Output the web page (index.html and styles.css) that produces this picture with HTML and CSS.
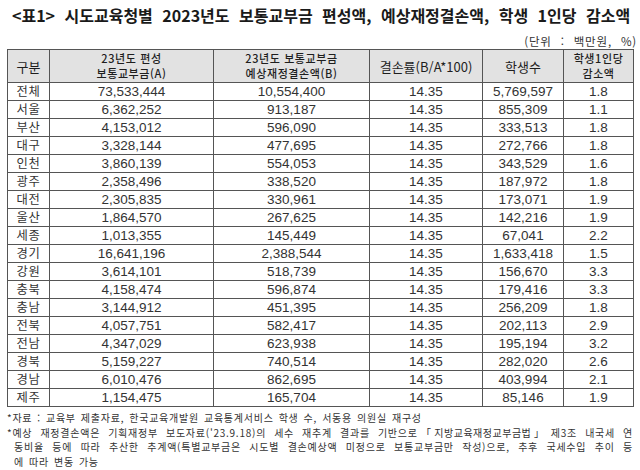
FILE: index.html
```html
<!DOCTYPE html>
<html lang="ko">
<head>
<meta charset="utf-8">
<title>표1</title>
<link rel="stylesheet" href="styles.css">
</head>
<body>
<div class="page">
  <h1 class="title">&lt;표1&gt; 시도교육청별 2023년도 보통교부금 편성액, 예상재정결손액, 학생 1인당 감소액</h1>
  <div class="unit">(단위 : 백만원, %)</div>
  <table class="grid">
    <colgroup>
      <col class="c1"><col class="c2"><col class="c3"><col class="c4"><col class="c5"><col class="c6">
    </colgroup>
    <thead>
      <tr>
        <th class="one">구분</th>
        <th>23년도 편성<br>보통교부금(A)</th>
        <th>23년도 보통교부금<br>예상재정결손액(B)</th>
        <th class="one">결손률(B/A*100)</th>
        <th class="one">학생수</th>
        <th>학생1인당<br>감소액</th>
      </tr>
    </thead>
    <tbody>
      <tr><td class="name">전체</td><td>73,533,444</td><td>10,554,400</td><td>14.35</td><td>5,769,597</td><td>1.8</td></tr>
      <tr><td class="name">서울</td><td>6,362,252</td><td>913,187</td><td>14.35</td><td>855,309</td><td>1.1</td></tr>
      <tr><td class="name">부산</td><td>4,153,012</td><td>596,090</td><td>14.35</td><td>333,513</td><td>1.8</td></tr>
      <tr><td class="name">대구</td><td>3,328,144</td><td>477,695</td><td>14.35</td><td>272,766</td><td>1.8</td></tr>
      <tr><td class="name">인천</td><td>3,860,139</td><td>554,053</td><td>14.35</td><td>343,529</td><td>1.6</td></tr>
      <tr><td class="name">광주</td><td>2,358,496</td><td>338,520</td><td>14.35</td><td>187,972</td><td>1.8</td></tr>
      <tr><td class="name">대전</td><td>2,305,835</td><td>330,961</td><td>14.35</td><td>173,071</td><td>1.9</td></tr>
      <tr><td class="name">울산</td><td>1,864,570</td><td>267,625</td><td>14.35</td><td>142,216</td><td>1.9</td></tr>
      <tr><td class="name">세종</td><td>1,013,355</td><td>145,449</td><td>14.35</td><td>67,041</td><td>2.2</td></tr>
      <tr><td class="name">경기</td><td>16,641,196</td><td>2,388,544</td><td>14.35</td><td>1,633,418</td><td>1.5</td></tr>
      <tr><td class="name">강원</td><td>3,614,101</td><td>518,739</td><td>14.35</td><td>156,670</td><td>3.3</td></tr>
      <tr><td class="name">충북</td><td>4,158,474</td><td>596,874</td><td>14.35</td><td>179,416</td><td>3.3</td></tr>
      <tr><td class="name">충남</td><td>3,144,912</td><td>451,395</td><td>14.35</td><td>256,209</td><td>1.8</td></tr>
      <tr><td class="name">전북</td><td>4,057,751</td><td>582,417</td><td>14.35</td><td>202,113</td><td>2.9</td></tr>
      <tr><td class="name">전남</td><td>4,347,029</td><td>623,938</td><td>14.35</td><td>195,194</td><td>3.2</td></tr>
      <tr><td class="name">경북</td><td>5,159,227</td><td>740,514</td><td>14.35</td><td>282,020</td><td>2.6</td></tr>
      <tr><td class="name">경남</td><td>6,010,476</td><td>862,695</td><td>14.35</td><td>403,994</td><td>2.1</td></tr>
      <tr><td class="name">제주</td><td>1,154,475</td><td>165,704</td><td>14.35</td><td>85,146</td><td>1.9</td></tr>
    </tbody>
  </table>
  <div class="notes">
    <div class="line">*자료 : 교육부 제출자료, 한국교육개발원 교육통계서비스 학생 수, 서동용 의원실 재구성</div>
    <div class="line just">*예상 재정결손액은 기획재정부 보도자료('23.9.18)의 세수 재추계 결과를 기반으로 <span class="law">「지방교육재정교부금법」</span> 제3조 내국세 연</div>
    <div class="line just indent">동비율 등에 따라 추산한 추계액(특별교부금은 시도별 결손예상액 미정으로 보통교부금만 작성)으로, 추후 국세수입 추이 등</div>
    <div class="line indent">에 따라 변동 가능</div>
  </div>
</div>
</body>
</html>
```

FILE: styles.css
```css
html, body {
  margin: 0;
  padding: 0;
  background: #ffffff;
}

body {
  font-family: "Noto Sans CJK KR", "Noto Sans", sans-serif;
  color: #222222;
}

.page {
  width: 640px;
  height: 470px;
  overflow: hidden;
}

.title {
  margin: 0;
  padding-left: 12px;
  font-size: 16px;
  font-weight: 700;
  line-height: 30px;
  height: 30px;
  color: #1a1a1a;
  white-space: nowrap;
  word-spacing: 5px;
}

.unit {
  margin-top: 5px;
  padding-right: 3px;
  text-align: right;
  font-size: 11.5px;
  line-height: 12px;
  height: 12px;
  color: #333333;
  word-spacing: 5px;
  letter-spacing: 0.8px;
}

.grid {
  margin-top: 2px;
  margin-left: 7px;
  width: 626px;
  border-collapse: collapse;
  table-layout: fixed;
  border: 1px solid #444444;
}

.c1 { width: 42px; }
.c2 { width: 164px; }
.c3 { width: 156px; }
.c4 { width: 113px; }
.c5 { width: 81px; }
.c6 { width: 70px; }

.grid th,
.grid td {
  border: 1px solid #555555;
  padding: 0;
  text-align: center;
  vertical-align: middle;
  white-space: nowrap;
}

.grid thead tr {
  height: 33px;
}

.grid th {
  background: #e2e2e2;
  font-size: 11px;
  font-weight: 500;
  color: #1e1e1e;
  line-height: 15.5px;
  letter-spacing: 0.6px;
}

.grid th.one {
  font-size: 13px;
  font-weight: 400;
  line-height: 19px;
  letter-spacing: 0;
}

.grid tbody tr {
  height: 18px;
}

.grid td {
  font-family: "Liberation Sans", "Noto Sans CJK KR", sans-serif;
  font-size: 13.5px;
  line-height: 16px;
  color: #333333;
}

.grid td.name {
  font-family: "Noto Sans CJK KR", sans-serif;
  font-size: 12.3px;
  line-height: 17px;
  letter-spacing: 0.8px;
}

.notes {
  margin-left: 7px;
  width: 626px;
  padding-top: 4px;
  font-size: 10px;
  line-height: 14.5px;
  color: #333333;
  letter-spacing: 0.75px;
  word-spacing: 1.5px;
}

.line {
  white-space: nowrap;
}

.just {
  white-space: normal;
  text-align: justify;
  text-align-last: justify;
}

.law {
  font-feature-settings: "palt";
  letter-spacing: 0.5px;
}

.indent {
  padding-left: 7px;
}
```
